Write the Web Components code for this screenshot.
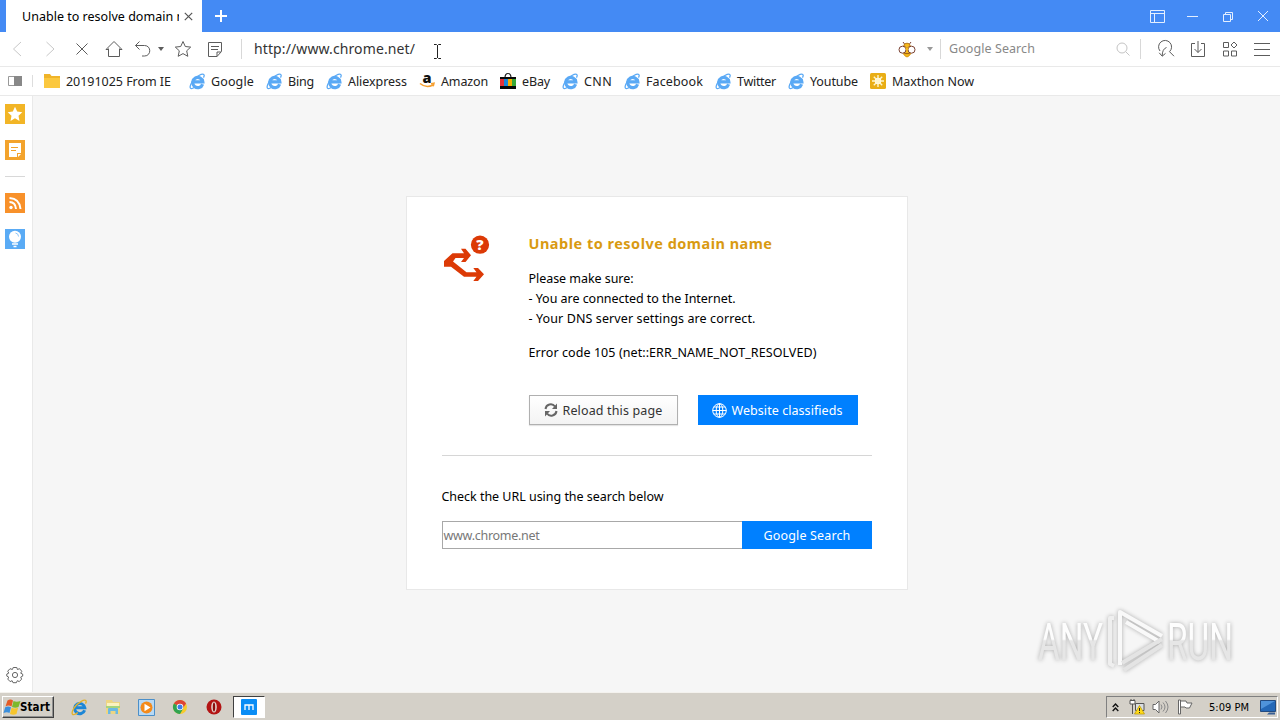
<!DOCTYPE html>
<html lang="en">
<head>
<meta charset="utf-8">
<title>Unable to resolve domain name</title>
<style>
  html, body {
    height: 100%;
    margin: 0;
    overflow: hidden;
  }

  body {
    font-family: "Noto Sans", "Open Sans", sans-serif;
    font-size: 12.5px;
  }
</style>
</head>
<body>
<mx-browser></mx-browser>

<script>
  const ICONS = {
    // Title bar
    cross: `<svg width="9" height="9" viewBox="0 0 9 9" stroke-width="1.200"><path d="M.8.8l7.400 7.400M8.200.8L.8 8.200"/></svg>`,
    plus: `<svg width="12" height="12" viewBox="0 0 12 12" stroke-width="2"><path d="M6 0v12M0 6h12"/></svg>`,
    skin: `<svg width="15" height="13" viewBox="0 0 15 13"><path d="M.5.5h14v12H.5zM.5 3.500h14M4.500 3.500v9"/></svg>`,
    minimize: `<svg width="11" height="11" viewBox="0 0 11 11"><path d="M0 5.500h11"/></svg>`,
    restore: `<svg width="10" height="11" viewBox="0 0 10 11"><path d="M.5 3.500h7v7h-7zM2.500 3V1.500h7v7H8"/></svg>`,
    close: `<svg width="12" height="12" viewBox="0 0 12 12"><path d="M1 1l10 10M11 1L1 11"/></svg>`,

    // Navigation
    back: `<svg width="16" height="18" viewBox="0 0 16 18"><path d="M11 2L3.500 9l7.500 7"/></svg>`,
    forward: `<svg width="16" height="18" viewBox="0 0 16 18"><path d="M4.500 2L12 9l-7.500 7"/></svg>`,
    stop: `<svg width="12" height="12" viewBox="0 0 12 12"><path d="M.5.5l11 11M11.500.5L.5 11.500"/></svg>`,
    home: `<svg width="18" height="18" viewBox="0 0 18 18"><path d="M3.500 8.500v8h11v-8M1 9.500L9 1.500l8 8M1 9.500h2.500M14.500 9.500H17"/></svg>`,
    undo: `<svg width="18" height="18" viewBox="0 0 18 18"><path d="M5.500 1.500L1.500 5.500l4 4M1.500 5.500h9c7 0 7 10.500 0 10.500H8"/></svg>`,
    caret: `<svg width="6" height="4" viewBox="0 0 6 4"><path d="M0 0h6L3 4z" fill="currentColor" stroke="none"/></svg>`,
    star: `<svg width="18" height="18" viewBox="0 0 18 18"><path d="M9 1.500l2.300 5 5.400.6-4 3.700 1.100 5.500L9 13.600l-4.800 2.700 1.100-5.500-4-3.700 5.400-.6z"/></svg>`,
    note: `<svg width="16" height="17" viewBox="0 0 16 17"><path d="M1.500 1.500h13v9l-4.500 5H1.500zM14 11h-4v4.500M4 5.500h8M4 8.500h7"/></svg>`,
    search: `<svg width="14" height="14" viewBox="0 0 14 14"><circle cx="6" cy="6" r="5"/><path d="M9.700 9.700L13.500 13.500"/></svg>`,
    scan: `<svg width="18" height="18" viewBox="0 0 18 18"><path d="M3 11A6.500 6.500 0 1 1 12.500 11.700L17 16.200"/><path d="M9.500 7.500Q5.200 9 5.200 16M2.200 12.800l3 3.400 3.300-2.800"/></svg>`,
    download: `<svg width="16" height="17" viewBox="0 0 16 17"><path d="M5 2.500H1.500v13h13v-13H11M8 0v11.500M4.500 8L8 11.500 11.500 8"/></svg>`,
    apps: `<svg width="16" height="16" viewBox="0 0 16 16"><path d="M1.500 1.500h5v5h-5zM1.500 10h5v5h-5zM9.500 10h5v5h-5zM12 1l3 3-3 3-3-3z"/></svg>`,
    menu: `<svg width="16" height="13" viewBox="0 0 16 13"><path d="M0 .5h16M0 6.500h16M0 12.500h16"/></svg>`,
    bee: `<svg width="18" height="17" viewBox="0 0 18 17" stroke="#7b4232">
      <path d="M6.500 3L5 1M11.500 3L13 1"/>
      <path d="M5.800 5a3.200 2.800 0 0 1 6.400 0L9 7z" fill="#f5b91c" stroke="#b8791a"/>
      <path d="M9 9l-4 3.200q1.500 3 4 3.800 2.500-.8 4-3.800z" fill="#f5b91c" stroke="#d9960f"/>
      <circle cx="4.500" cy="8.700" r="3.500" fill="#fff"/><circle cx="13.500" cy="8.700" r="3.500" fill="#fff"/>
      <path d="M7 6.500h4L9 11z" fill="#f5b91c" stroke="none"/>
      <path d="M6.300 12.600h5.400" stroke="#9b5a14"/>
    </svg>`,

    // Bookmarks
    panel: `<svg width="14" height="10" viewBox="0 0 14 10"><path d="M.5.5h13v9H.5z" stroke="#999" fill="#fff"/><path d="M6 0h8v10H6z" fill="#888" stroke="none"/></svg>`,
    folder: `<svg width="16" height="14" viewBox="0 0 16 14" stroke="none"><path d="M0 0h6l1.500 2H16v12H0z" fill="#f0b429"/><path d="M0 4h16v10H0z" fill="#fbc83f"/></svg>`,
    ie: `<svg width="17" height="17" viewBox="0 0 17 17">
      <path d="M13.600 11.200A5.100 5.100 0 1 1 13.800 8.800H5" stroke="#5aa9f5" stroke-width="3.200"/>
      <path d="M3 9C7 3 13.500.2 14.900 1.600c.7.8.1 2.200-.4 3M3 9C.9 12.500.6 15 1.800 15.500c1.500.5 3.600-.8 5-1.900" stroke="#5aa9f5" stroke-width="1.300"/>
    </svg>`,
    amazon: `<svg width="16" height="16" viewBox="0 0 16 16" stroke="none"><text x="3.500" y="10" font-family="Open Sans" font-size="14.500" font-weight="800" fill="#111">a</text><path d="M1 10.500q6 5 13 1.500M12 10.800l3-.5-.8 3" fill="none" stroke="#f5a032" stroke-width="1.500"/></svg>`,
    ebay: `<svg width="16" height="16" viewBox="0 0 16 16" stroke="none"><path d="M5 5q0-4.500 3-4.500t3 4.500" fill="none" stroke="#222" stroke-width="1.200"/><path d="M0 4h16v12H0z" fill="#080808"/><path d="M0 6h4v7H0z" fill="#e43238"/><path d="M4 6h4v7H4z" fill="#1687d9"/><path d="M8 6h4v7H8z" fill="#f5af02"/><path d="M12 6h4v7h-4z" fill="#38a838"/></svg>`,
    sun: `<svg width="16" height="16" viewBox="0 0 16 16"><rect width="16" height="16" rx="1.500" fill="#e9ae15" stroke="none"/><circle cx="8" cy="8" r="3.200" fill="#fff" stroke="none"/><path d="M8 2v12M2 8h12M3.800 3.800l8.400 8.400M12.200 3.800l-8.400 8.400" stroke="#fff6cc" stroke-width="1.400"/></svg>`,

    // Side bar
    favorites: `<svg width="20" height="20" viewBox="0 0 20 20" stroke="none"><path d="M0 0h20v20H0z" fill="#f2b526"/><path d="M10 2.800l2.200 4.800 5.100.6-3.800 3.500 1 5.300-4.500-2.700L5.500 17l1-5.300-3.800-3.500 5.100-.6z" fill="#fff"/></svg>`,
    notes: `<svg width="20" height="20" viewBox="0 0 20 20" stroke="none"><path d="M0 0h20v20H0z" fill="#f3a32c"/><path d="M4 3h12v10h-4v4H4zM13 14h3l-3 3z" fill="#fff"/><path d="M6 7.500h7M6 10.500h5" stroke="#f3a32c" stroke-width="1.200"/></svg>`,
    rss: `<svg width="20" height="20" viewBox="0 0 20 20" stroke="none"><path d="M0 0h20v20H0z" fill="#f8912a"/><circle cx="6" cy="14.500" r="1.700" fill="#fff"/><path d="M4.500 9q6 0 6.500 7M4.500 5q10 .5 11 11" fill="none" stroke="#fff" stroke-width="2"/></svg>`,
    bulb: `<svg width="20" height="20" viewBox="0 0 20 20" stroke="none"><path d="M0 0h20v20H0z" fill="#5aabf5"/><circle cx="10" cy="7.800" r="6" fill="#fff"/><path d="M7 15h6M8.500 17.500h3" stroke="#fff" stroke-width="1.300"/><path d="M10.500 4q3 .5 3 3.500" stroke="#8cc6fa" fill="none"/></svg>`,
    gear: `<svg width="18" height="18" viewBox="0 0 18 18"><path d="M7.200 1.500h3.600l.6 2 2.200-.8 2.200 2.600-1.100 1.900 2 .9v2l-2 1 .9 2-2.300 2.500-2-.9-.9 2H7l-.9-2-2 .9-2.300-2.500.9-2-1.900-1V8l2-.9-1.100-1.900L4 2.700l2.400.8z" stroke-linejoin="round"/><circle cx="9" cy="9" r="2.600"/></svg>`,

    // Error page
    branch: `<svg width="50" height="50" viewBox="0 0 50 50" stroke="none">
      <path d="M2 27L10.500 19.200H22L19 14.700h4.500L29 21.300 23.500 28H19l3-4h-8.500L11 27.500l13.500 10.700h10L31.300 34H36l6 6.300L36 47h-4.700l3.200-4.200H22L9 32.700H2z" fill="#dc3a06"/>
      <circle cx="38" cy="10.700" r="9.100" fill="#dc3a06"/>
      <text x="38" y="15.800" text-anchor="middle" font-family="Open Sans" font-weight="800" font-size="14.500" fill="#fff">?</text>
    </svg>`,
    reload: `<svg width="14" height="14" viewBox="0 0 14 14" stroke="#666" stroke-width="2"><path d="M1.500 6A5.300 5.300 0 0 1 11 3.500M12.500 8A5.300 5.300 0 0 1 3 10.500"/><path d="M13 .5v5.500H8zM1 13.500V8h5z" fill="#666" stroke="none"/></svg>`,
    globe: `<svg width="15" height="15" viewBox="0 0 15 15"><circle cx="7.500" cy="7.500" r="6.800"/><ellipse cx="7.500" cy="7.500" rx="3.300" ry="6.800"/><path d="M7.500.5v14M.5 7.500h14M1.800 4h11.400M1.800 11h11.400"/></svg>`,

    // Task bar
    windows: `<svg width="17" height="16" viewBox="0 0 17 16" stroke="none"><path d="M3.500 1.500q3-2 5.500 0L7.500 7.500Q4.500 5.500 1.500 7.500z" fill="#e55b25"/><path d="M9.500 2q3 1.500 7 0L14.500 8q-3 1.500-6.500 0z" fill="#7db82c"/><path d="M1.200 8.200Q4 6.800 7 8.200L5.500 14Q3 12.500-.5 14z" fill="#3c8fdc"/><path d="M7.600 8.700q3 1.500 6.500 0L12.500 15q-3 1.500-6.500 0z" fill="#f7c52c"/></svg>`,
    ieBig: `<svg width="17" height="17" viewBox="0 0 17 17"><path d="M13.600 11.200A5.100 5.100 0 1 1 13.800 8.800H5" stroke="#1c86d6" stroke-width="3"/><path d="M3 9C7 3 13.500.2 14.900 1.600c.7.8.1 2.200-.4 3M3 9C.9 12.500.6 15 1.800 15.500c1.500.5 3.600-.8 5-1.900" stroke="#e3b22d" stroke-width="1.400"/></svg>`,
    explorer: `<svg width="16" height="16" viewBox="0 0 16 16" stroke="none"><path d="M1 1h6l1 2h7v12H1z" fill="#eed583"/><path d="M2 4h12v4H2z" fill="#fbf2bf"/><path d="M3 15v-5q0-1 1-1h8q1 0 1 1v5h-2.500v-3h-5v3z" fill="#6bb9e4"/><path d="M1 7h14v2H1z" fill="#a7d47c"/></svg>`,
    player: `<svg width="17" height="17" viewBox="0 0 17 17" stroke="none"><path d="M.5.500h16v16H.5z" fill="#b8d9f4" stroke="#4b8fc9"/><circle cx="8.500" cy="8.500" r="6" fill="#f48a1a"/><path d="M6.500 4.800l6 3.700-6 3.700z" fill="#fff"/></svg>`,
    chrome: `<svg width="14" height="14" viewBox="0 0 14 14" stroke="none"><circle cx="7" cy="7" r="7" fill="#f7cb2b"/><path d="M7 7L.9 3.500A7 7 0 0 1 13.100 3.500z" fill="#dd4537"/><path d="M7 7L.9 3.500A7 7 0 0 0 7 14l3-5z" fill="#31a350"/><path d="M7 3.500h6.100L10 8z" fill="#dd4537"/><circle cx="7" cy="7" r="3.300" fill="#fff"/><circle cx="7" cy="7" r="2.500" fill="#3c7fe8"/></svg>`,
    opera: `<svg width="16" height="16" viewBox="0 0 16 16" stroke="none"><circle cx="8" cy="8" r="7.500" fill="#b31414"/><ellipse cx="8" cy="8" rx="2.800" ry="5.500" fill="#e3d4ce"/><ellipse cx="8" cy="8" rx="1.200" ry="4.600" fill="#8c0d0d"/></svg>`,
    maxthon: `<svg width="16" height="16" viewBox="0 0 16 16" stroke="none"><rect width="16" height="16" rx="1" fill="#0a8df5"/><path d="M4 11V6h8v5M8 6v5" fill="none" stroke="#fff" stroke-width="1.300"/></svg>`,
    chevrons: `<svg width="7" height="9" viewBox="0 0 7 9" stroke="#111" stroke-width="1.400"><path d="M.7 4l2.800-3 2.800 3M.7 8l2.800-3 2.800 3"/></svg>`,
    network: `<svg width="16" height="16" viewBox="0 0 16 16"><path d="M1 1.500h5V5H1zM2 0v1.500M5 0v1.500M3.500 5v10" stroke="#555" fill="#fff"/><path d="M6.500 4.500h8.500v7H6.500z" stroke="#555" fill="#d9dde1"/><path d="M10.500 6.500l5 8.500h-10z" fill="#ffda19" stroke="#b79500" stroke-width=".7"/><path d="M10.500 9v3M10.500 13v1" stroke="#222"/></svg>`,
    speaker: `<svg width="17" height="14" viewBox="0 0 17 14" stroke="#666"><path d="M1 4.500h2.500L7 1v12L3.500 9.500H1z" fill="#fff"/><path d="M9 4.500q2 2.500 0 5M11 2.500q4 4.500 0 9M13.500 1q5 6 0 12" stroke="#888"/></svg>`,
    flag: `<svg width="16" height="16" viewBox="0 0 16 16" stroke="#666"><path d="M1.500 1h2v14h-2z" fill="#fff"/><path d="M3.500 2H9l1 2h5l-2.500 5H9L8 8H3.500z" fill="#fff"/></svg>`,
    desktop: `<svg width="16" height="15" viewBox="0 0 16 15" stroke="none"><path d="M.5.500h15v11H.5z" fill="#2468b7" stroke="#234b80"/><path d="M1 1h14L1 9z" fill="#4f93da"/><path d="M9 12.500h6v2H7z" fill="#385f93"/></svg>`
  };

  // Glyph picked by name
  class MxIcon extends HTMLElement {
    constructor() {
      super();
      this.attachShadow( {mode: 'open'} );
    }

    connectedCallback() {
      this.shadowRoot.innerHTML = /* template */ `
        <style>
          :host {
            align-items: center;
            display: flex;
            flex: none;
            justify-content: center;
          }

          svg {
            display: block;
            flex: none;
            overflow: visible;
          }
        </style>
        ${ICONS[this.getAttribute( 'name' )] || ''}
      `;
      const svg = this.shadowRoot.querySelector( 'svg' );
      svg.setAttribute( 'fill', 'none' );
      if( !svg.hasAttribute( 'stroke' ) ) {
        svg.setAttribute( 'stroke', 'currentColor' );
      }
    }
  }

  window.customElements.define( 'mx-icon', MxIcon );

  // Single line of text, tracked to fill a given width
  class MxLabel extends HTMLElement {
    constructor() {
      super();
      this.attachShadow( {mode: 'open'} );
      this.shadowRoot.innerHTML = /* template */ `
        <style>
          :host {
            display: block;
            flex: none;
            white-space: nowrap;
          }

          span {
            display: inline-block;
          }
        </style>
        <span><slot></slot></span>
      `;
      this.$text = this.shadowRoot.querySelector( 'span' );
    }

    connectedCallback() {
      const width = parseFloat( this.getAttribute( 'width' ) );
      const count = this.textContent.length;
      this.style.width = `${width}px`;
      this.$text.style.letterSpacing = '0px';
      const natural = this.$text.getBoundingClientRect().width;
      this.$text.style.letterSpacing = `${( width - natural ) / count}px`;
    }
  }

  window.customElements.define( 'mx-label', MxLabel );

  function define( name, html ) {
    const template = document.createElement( 'template' );
    template.innerHTML = html;

    window.customElements.define( name, class extends HTMLElement {
      constructor() {
        super();
        this.attachShadow( {mode: 'open'} );
        this.shadowRoot.appendChild( template.content.cloneNode( true ) );
      }
    } );
  }

  define( 'mx-titlebar', /* template */ `
    <style>
      :host {
        background: #448af4;
        box-sizing: border-box;
        color: #ffffff;
        display: flex;
        height: 32px;
        padding: 0 11px 0 6px;
      }

      .tab {
        align-items: center;
        background: #ffffff;
        box-sizing: border-box;
        color: #000000;
        display: flex;
        padding: 0 10px 0 16px;
        width: 196px;
      }

      .title {
        flex: none;
        overflow: hidden;
        width: 157px;
      }

      .tab mx-icon {
        color: #555555;
        margin-left: 5px;
      }

      .add {
        margin-left: 13px;
      }

      .window {
        align-items: center;
        color: #e4efff;
        display: flex;
        gap: 23px;
        margin-left: auto;
      }
    </style>
    <div class="tab">
      <div class="title"><mx-label width="188">Unable to resolve domain name</mx-label></div>
      <mx-icon name="cross"></mx-icon>
    </div>
    <mx-icon class="add" name="plus"></mx-icon>
    <div class="window">
      <mx-icon name="skin" style="margin-right: -1px;"></mx-icon>
      <mx-icon name="minimize"></mx-icon>
      <mx-icon name="restore" style="margin-left: 2px;"></mx-icon>
      <mx-icon name="close" style="margin-left: 1px;"></mx-icon>
    </div>
  ` );

  define( 'mx-navbar', /* template */ `
    <style>
      :host {
        align-items: center;
        background: #ffffff;
        border-bottom: solid 1px #e9e9e9;
        color: #5c5c5c;
        display: flex;
        height: 34px;
      }

      .slot {
        width: 32px;
      }

      .off {
        color: #c8c8c8;
      }

      i {
        background: #d8d8d8;
        flex: none;
        height: 20px;
        width: 1px;
      }

      .url {
        color: #333333;
        font-size: 14px;
        margin-left: 12px;
        padding-bottom: 2px;
      }

      .search {
        align-items: center;
        display: flex;
        margin-left: auto;
      }

      .search mx-label {
        color: #888888;
        margin-left: 8px;
        padding-bottom: 1px;
      }

      .tools {
        align-items: center;
        display: flex;
        gap: 16px;
        margin: 0 10px 0 16px;
      }
    </style>
    <mx-icon class="slot off" name="back" style="margin-left: 2px;"></mx-icon>
    <mx-icon class="slot off" name="forward"></mx-icon>
    <mx-icon class="slot" name="stop"></mx-icon>
    <mx-icon class="slot" name="home"></mx-icon>
    <mx-icon name="undo" style="margin-left: 4px;"></mx-icon>
    <mx-icon name="caret" style="margin-left: 6px;"></mx-icon>
    <mx-icon name="star" style="margin-left: 10px;"></mx-icon>
    <mx-icon name="note" style="margin-left: 15px;"></mx-icon>
    <i style="margin-left: 18px;"></i>
    <mx-label class="url" width="161">http://www.chrome.net/</mx-label>
    <div class="search">
      <mx-icon name="bee"></mx-icon>
      <mx-icon name="caret" style="color: #999999; margin-left: 11px;"></mx-icon>
      <i style="margin-left: 7px;"></i>
      <mx-label width="86">Google Search</mx-label>
      <mx-icon name="search" style="color: #c4c4c4; margin-left: 81px;"></mx-icon>
      <i style="margin-left: 10px;"></i>
    </div>
    <div class="tools">
      <mx-icon name="scan" style="margin-right: -1px;"></mx-icon>
      <mx-icon name="download"></mx-icon>
      <mx-icon name="apps"></mx-icon>
      <mx-icon name="menu"></mx-icon>
    </div>
  ` );

  // Icon and label, label is slotted
  class MxBookmark extends HTMLElement {
    constructor() {
      super();
      this.attachShadow( {mode: 'open'} );
      this.shadowRoot.innerHTML = /* template */ `
        <style>
          :host {
            align-items: center;
            display: flex;
            flex: none;
          }

          mx-icon {
            margin-right: 6px;
            width: 16px;
          }
        </style>
        <mx-icon name="${this.getAttribute( 'icon' ) || 'ie'}"></mx-icon>
        <slot></slot>
      `;
    }
  }

  window.customElements.define( 'mx-bookmark', MxBookmark );

  const BOOKMARKS = [
    ['folder', '20191025 From IE', 105],
    ['ie', 'Google', 43],
    ['ie', 'Bing', 26],
    ['ie', 'Aliexpress', 59],
    ['amazon', 'Amazon', 47],
    ['ebay', 'eBay', 28],
    ['ie', 'CNN', 28],
    ['ie', 'Facebook', 57],
    ['ie', 'Twitter', 39],
    ['ie', 'Youtube', 48],
    ['sun', 'Maxthon Now', 82]
  ];

  define( 'mx-bookmarks', /* template */ `
    <style>
      :host {
        align-items: center;
        background: #ffffff;
        border-bottom: solid 1px #e9e9e9;
        color: #222222;
        display: flex;
        gap: 12px;
        height: 28px;
        padding-left: 8px;
      }

      i {
        background: #dddddd;
        height: 12px;
        margin-right: -1px;
        width: 1px;
      }

      mx-bookmark:first-of-type {
        margin-right: 6px;
      }
    </style>
    <mx-icon name="panel" style="margin-right: -2px;"></mx-icon>
    <i></i>
    ${BOOKMARKS.map( ( [icon, text, width] ) => `
      <mx-bookmark icon="${icon}"><mx-label width="${width}">${text}</mx-label></mx-bookmark>
    ` ).join( '' )}
  ` );

  define( 'mx-sidebar', /* template */ `
    <style>
      :host {
        align-items: center;
        background: #ffffff;
        border-right: solid 1px #e9e9e9;
        box-sizing: border-box;
        color: #666666;
        display: flex;
        flex: none;
        flex-direction: column;
        gap: 16px;
        padding: 8px 2px 8px 0;
        width: 33px;
      }

      hr {
        background: #d8d8d8;
        border: none;
        height: 1px;
        margin: 0;
        width: 20px;
      }

      mx-icon:last-child {
        margin-top: auto;
      }
    </style>
    <mx-icon name="favorites"></mx-icon>
    <mx-icon name="notes"></mx-icon>
    <hr>
    <mx-icon name="rss"></mx-icon>
    <mx-icon name="bulb"></mx-icon>
    <mx-icon name="gear"></mx-icon>
  ` );

  define( 'mx-error', /* template */ `
    <style>
      :host {
        background: #ffffff;
        border: solid 1px #e8e8e8;
        box-sizing: border-box;
        color: #000000;
        display: block;
        font-size: 12.5px;
        height: 394px;
        line-height: 20px;
        padding: 37px 35px 0 35px;
        width: 502px;
      }

      .message {
        display: flex;
        gap: 37px;
      }

      .message > mx-icon {
        align-self: flex-start;
        height: 50px;
        width: 50px;
      }

      h1 {
        color: #d99a12;
        font-size: 14.5px;
        line-height: 20px;
        margin: -1px 0 16px 0;
      }

      .code {
        margin-top: 14px;
      }

      .actions {
        display: flex;
        gap: 20px;
        margin-top: 32px;
      }

      button {
        align-items: center;
        appearance: none;
        background: #0080ff;
        border: none;
        box-sizing: border-box;
        color: #ffffff;
        display: flex;
        font: inherit;
        height: 30px;
        padding: 0 0 0 14px;
        width: 160px;
      }

      button mx-label, .field mx-label {
        padding-top: 2px;
      }

      button mx-icon {
        margin-right: 5px;
      }

      .plain {
        background: linear-gradient( #ffffff, #f3f3f3 );
        border: solid 1px #b0b0b0;
        box-shadow: 0 1px 1px #e4e4e4;
        color: #333333;
        width: 149px;
      }

      hr {
        background: #d6d6d6;
        border: none;
        height: 1px;
        margin: 30px 0 31px 0;
      }

      form {
        display: flex;
        margin-top: 14px;
      }

      .field {
        align-items: center;
        border: solid 1px #a8a8a8;
        border-right: none;
        box-sizing: border-box;
        color: #777777;
        display: flex;
        height: 28px;
        padding-left: 1px;
        width: 300px;
      }

      form button {
        height: 28px;
        padding-left: 22px;
        width: 130px;
      }
    </style>
    <div class="message">
      <mx-icon name="branch"></mx-icon>
      <div>
        <h1><mx-label width="244">Unable to resolve domain name</mx-label></h1>
        <mx-label width="105">Please make sure:</mx-label>
        <mx-label width="207">- You are connected to the Internet.</mx-label>
        <mx-label width="227">- Your DNS server settings are correct.</mx-label>
        <mx-label class="code" width="288">Error code 105 (net::ERR_NAME_NOT_RESOLVED)</mx-label>
        <div class="actions">
          <button class="plain"><mx-icon name="reload"></mx-icon><mx-label width="100">Reload this page</mx-label></button>
          <button><mx-icon name="globe"></mx-icon><mx-label width="111">Website classifieds</mx-label></button>
        </div>
      </div>
    </div>
    <hr>
    <mx-label width="222">Check the URL using the search below</mx-label>
    <form>
      <div class="field"><mx-label width="96">www.chrome.net</mx-label></div>
      <button type="button"><mx-label width="87">Google Search</mx-label></button>
    </form>
  ` );

  // Translucent logo in the corner of the page
  define( 'mx-watermark', /* template */ `
    <style>
      :host {
        display: block;
        filter: drop-shadow( 0 0 2px #aaaaaa );
      }

      svg {
        display: block;
        overflow: visible;
      }

      text {
        font-family: Roboto, sans-serif;
        font-size: 52px;
        font-weight: 400;
      }
    </style>
    <svg width="210" height="68" viewBox="0 0 210 68">
      <defs>
        <linearGradient id="fade" x1="0" y1="10" x2="0" y2="54" gradientUnits="userSpaceOnUse">
          <stop offset=".48" stop-color="#fdfdfd"/>
          <stop offset=".52" stop-color="#e6e6e6"/>
        </linearGradient>
      </defs>
      <g fill="url(#fade)">
        <text x="2" y="52" textLength="65" lengthAdjust="spacingAndGlyphs">ANY</text>
        <text x="131" y="52" textLength="66" lengthAdjust="spacingAndGlyphs">RUN</text>
      </g>
      <g fill="none" stroke="#f9f9f9" stroke-width="4" stroke-linejoin="round">
        <path d="M78 10h-4v46l4 2" stroke="#efefef"/>
        <path d="M84 57V4l42 24M90 14l34 20"/>
        <path d="M126 31L86 55M126 37L88 62" stroke="#e4e4e4"/>
      </g>
    </svg>
  ` );

  define( 'mx-taskbar', /* template */ `
    <style>
      :host {
        align-items: center;
        background: #d4d0c8;
        border-top: solid 1px #f4f2ee;
        box-sizing: border-box;
        color: #000000;
        display: flex;
        font-family: "DejaVu Sans Condensed", "DejaVu Sans", sans-serif;
        font-size: 11px;
        height: 28px;
        padding: 1px 2px 0 2px;
      }

      .start, .active, .tray {
        align-items: center;
        border: solid 1px;
        box-sizing: border-box;
        display: flex;
        height: 22px;
      }

      .start {
        border-color: #ffffff #404040 #404040 #ffffff;
        box-shadow: inset -1px -1px #909090;
        font-size: 11.5px;
        font-weight: bold;
        padding-left: 1px;
        width: 52px;
      }

      .start mx-label {
        margin-left: -1px;
      }

      .launch {
        align-items: center;
        display: flex;
        margin-left: 9px;
      }

      .launch mx-icon {
        width: 33.5px;
      }

      .active {
        background: #ffffff;
        border-color: #404040 #ffffff #ffffff #404040;
        justify-content: center;
        margin-left: 2px;
        width: 32px;
      }

      .tray {
        border-color: #808080 #ffffff #ffffff #808080;
        margin-left: auto;
        padding-left: 5px;
        width: 172px;
      }
    </style>
    <div class="start">
      <mx-icon name="windows"></mx-icon>
      <mx-label width="30">Start</mx-label>
    </div>
    <div class="launch">
      <mx-icon name="ieBig"></mx-icon>
      <mx-icon name="explorer"></mx-icon>
      <mx-icon name="player"></mx-icon>
      <mx-icon name="chrome"></mx-icon>
      <mx-icon name="opera"></mx-icon>
    </div>
    <div class="active"><mx-icon name="maxthon"></mx-icon></div>
    <div class="tray">
      <mx-icon name="chevrons"></mx-icon>
      <mx-icon name="network" style="margin-left: 10px;"></mx-icon>
      <mx-icon name="speaker" style="margin-left: 7px;"></mx-icon>
      <mx-icon name="flag" style="margin-left: 8px;"></mx-icon>
      <mx-label width="40" style="margin-left: 16px;">5:09 PM</mx-label>
      <mx-icon name="desktop" style="margin-left: 11px;"></mx-icon>
    </div>
  ` );

  define( 'mx-browser', /* template */ `
    <style>
      :host {
        display: flex;
        flex-direction: column;
        height: 720px;
        position: relative;
        width: 1280px;
      }

      .body {
        display: flex;
        flex: 1;
      }

      main {
        background: #f6f6f6;
        display: flex;
        flex: 1;
        justify-content: center;
        padding-top: 100px;
      }

      mx-watermark {
        left: 1036px;
        position: absolute;
        top: 608px;
      }

      /* Text cursor */
      .pointer {
        left: 433px;
        position: absolute;
        top: 44px;
      }
    </style>
    <mx-titlebar></mx-titlebar>
    <mx-navbar></mx-navbar>
    <mx-bookmarks></mx-bookmarks>
    <div class="body">
      <mx-sidebar></mx-sidebar>
      <main><mx-error></mx-error></main>
    </div>
    <mx-taskbar></mx-taskbar>
    <mx-watermark></mx-watermark>
    <svg class="pointer" width="9" height="15" viewBox="0 0 9 15" fill="none" stroke="#222222"><path d="M1 .5h2.500l1 1 1-1H8M4.500 1v13M1 14.500h2.500l1-1 1 1H8"/></svg>
  ` );
</script>
</body>
</html>
